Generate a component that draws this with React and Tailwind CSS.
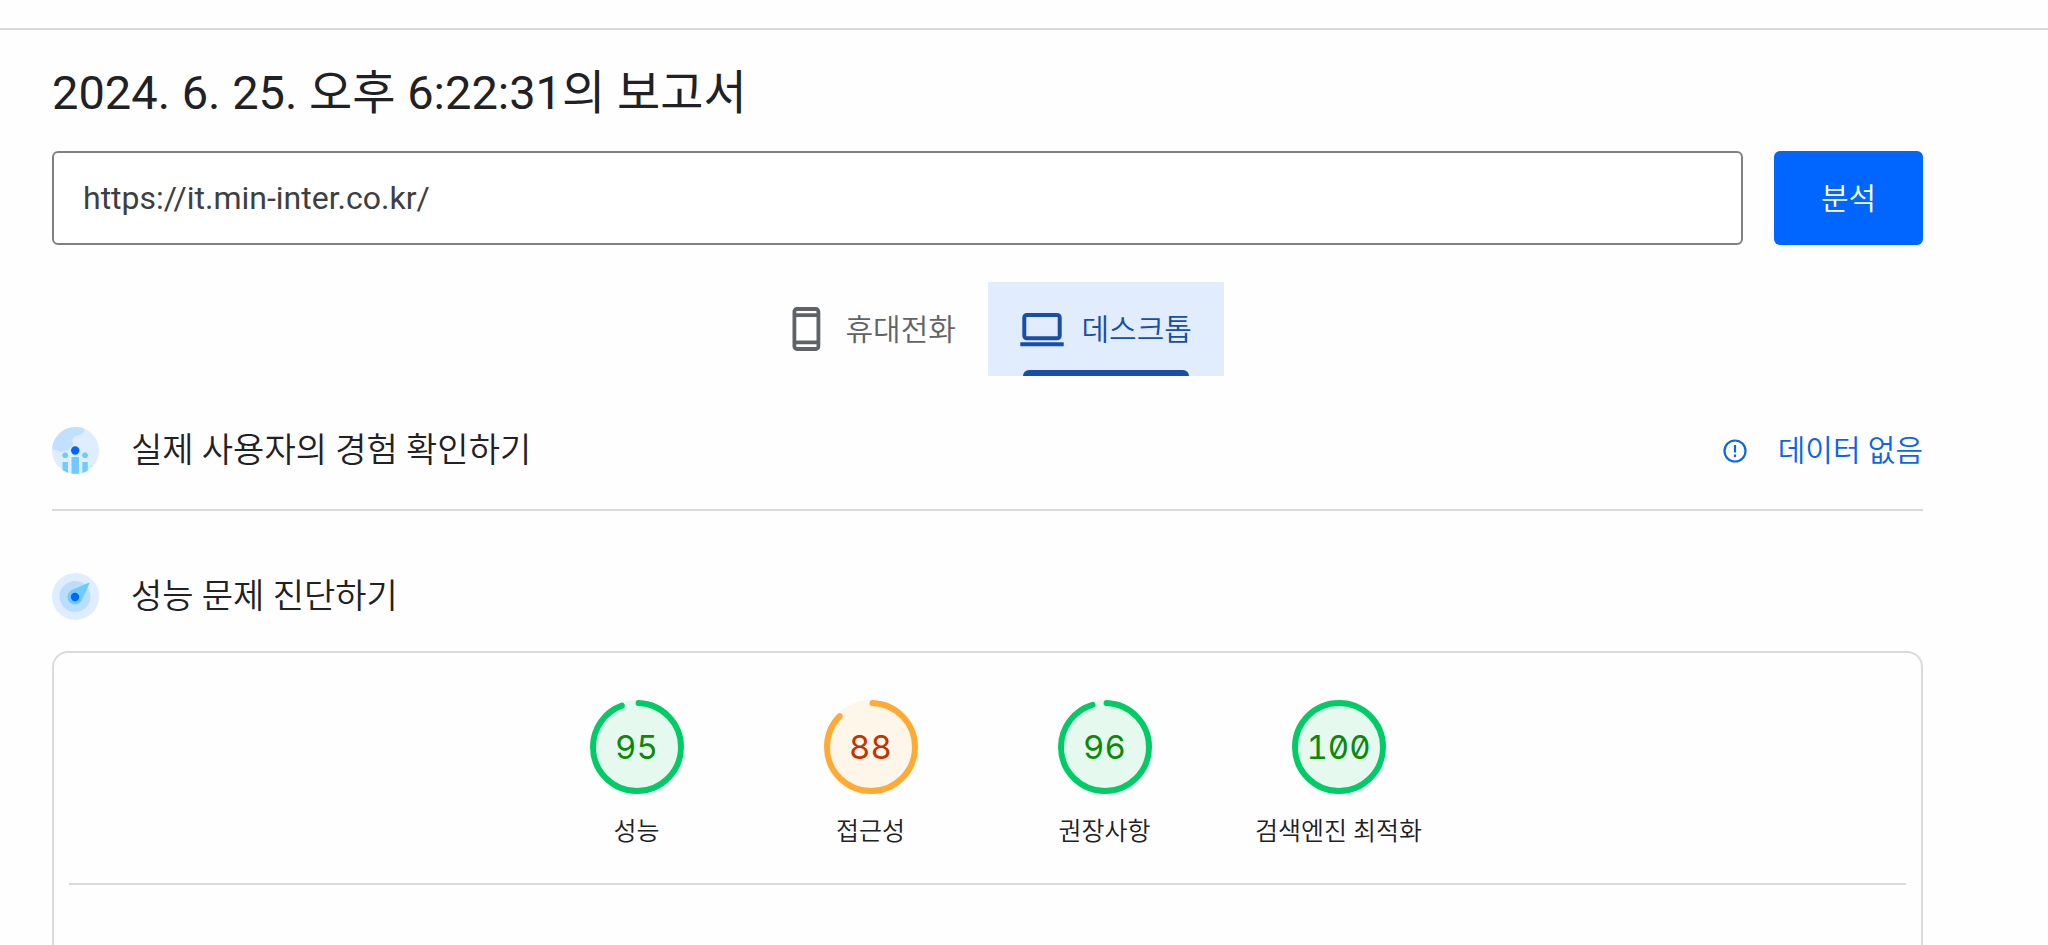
import { useState } from "react";

const GAUGES = [
  { label: "성능", score: 95, tone: "pass" },
  { label: "접근성", score: 88, tone: "average" },
  { label: "권장사항", score: 96, tone: "pass" },
  { label: "검색엔진 최적화", score: 100, tone: "pass" },
];

const TONES = {
  pass: { ring: "stroke-[#00cc66]", fill: "fill-[#e5f9ee]", text: "text-[#0a8a0a]" },
  average: { ring: "stroke-[#ffaa33]", fill: "fill-[#fff6ea]", text: "text-[#c33300]" },
};

function PhoneIcon() {
  return (
    <svg viewBox="0 0 44 44" className="size-11 shrink-0" fill="none" stroke="currentColor" strokeWidth="3.8" aria-hidden="true">
      <rect x="10.4" y="2" width="24" height="40" rx="2.5" />
      <path d="M10 8.2h24M10 35.4h24" />
    </svg>
  );
}

function LaptopIcon() {
  return (
    <svg viewBox="0 0 44 44" className="size-11 shrink-0" fill="none" stroke="currentColor" strokeWidth="4" aria-hidden="true">
      <rect x="4.3" y="8" width="35.4" height="23.3" rx="2.5" />
      <path d="M.3 37.2h43.4" />
    </svg>
  );
}

function UsersIcon() {
  return (
    <svg viewBox="0 0 47 47" className="size-[47px] shrink-0" aria-hidden="true">
      <clipPath id="globe">
        <circle cx="23.5" cy="23.5" r="23.5" />
      </clipPath>
      <g clipPath="url(#globe)">
        <rect width="47" height="47" fill="#deedff" />
        <path d="M0 0h30c3 2 3 4 1 6-2 2-5 2-7 3-3 1-3 3-4 4-1 1 1 2 1 4 0 3-3 3-4 5s-3 1-5 2-3 1-5 0-4-1-7-2z" fill="#bfe0ff" />
        <g fill="#6fcbff" stroke="#e6f2ff" strokeWidth="1">
          <path d="M19 29.5h8.500v20H19zM10 34.500h6.500v13H10zM29.800 34.500h6.500v13h-6.500z" />
          <circle cx="13.200" cy="28.300" r="3.500" />
          <circle cx="33" cy="28.300" r="3.500" />
        </g>
        <circle cx="39.500" cy="39" r="1" fill="#bfe0ff" />
        <circle cx="23.200" cy="23.500" r="4.200" fill="#0066ff" />
      </g>
    </svg>
  );
}

function CompassIcon() {
  return (
    <svg viewBox="0 0 47 47" className="size-[47px] shrink-0" aria-hidden="true">
      <circle cx="23.5" cy="23.5" r="23.5" fill="#deedff" />
      <circle cx="23" cy="23.5" r="15.5" fill="#bbdeff" />
      <g fill="#6fcbff">
        <circle cx="23" cy="24" r="7.6" />
        <path d="M18.500 17.800 36.300 9.800q1.600-.5 1 1L29.300 28.500z" />
      </g>
      <circle cx="23" cy="24" r="4.200" fill="#0066ff" />
    </svg>
  );
}

function InfoIcon() {
  return (
    <svg viewBox="0 0 24 24" className="size-6 shrink-0" fill="none" stroke="currentColor" strokeWidth="2.2" aria-hidden="true">
      <circle cx="12" cy="12" r="10.5" />
      <path d="M12 6v7.500M12 15.500v2.500" />
    </svg>
  );
}

function Gauge({ label, score, tone }) {
  const colors = TONES[tone];
  // round caps stick out past the arc, so the dash is cut a little short
  const dash = score === 100 ? 100 : score - 1.2;
  return (
    <a href="#" className="flex w-[234px] flex-col items-center">
      <div className="grid size-[94px] place-items-center">
        <svg viewBox="0 0 94 94" className="col-start-1 row-start-1 size-full -rotate-90" aria-hidden="true">
          <circle cx="47" cy="47" r="47" className={colors.fill} />
          <circle
            cx="47"
            cy="47"
            r="44"
            fill="none"
            strokeWidth="6"
            strokeLinecap="round"
            pathLength="100"
            strokeDasharray={`${dash} 100`}
            strokeDashoffset={score === 100 ? 0 : -0.6}
            className={colors.ring}
          />
        </svg>
        <span className={`z-10 col-start-1 row-start-1 font-[Inter,sans-serif] text-[33px] leading-10 slashed-zero tabular-nums ${colors.text}`}>
          {score}
        </span>
      </div>
      <span className="mt-5 text-[25px] leading-9 font-[350]">{label}</span>
    </a>
  );
}

function Tab({ icon, label, active, onClick }) {
  return (
    <button
      type="button"
      role="tab"
      aria-selected={active}
      onClick={onClick}
      className={`relative flex h-[94px] w-[236px] items-center gap-[18px] pl-8 text-[30px] font-[350] ${
        active ? "bg-[#e1edfc] text-[#174ea6]" : "text-[#5f6368]"
      }`}
    >
      {icon}
      {label}
      {active && <span className="absolute inset-x-[35px] bottom-0 h-1.5 rounded-t-md bg-[#174ea6]" />}
    </button>
  );
}

export default function App() {
  const [url, setUrl] = useState("https://it.min-inter.co.kr/");
  const [device, setDevice] = useState("desktop");

  return (
    <div className="flex min-h-screen flex-col bg-[#fefefe] font-[Roboto,'Noto_Sans_CJK_KR',sans-serif] text-[#202124]">
      <header className="h-[30px] shrink-0 border-b-2 border-[#dadada]" />

      <main className="mr-[125px] ml-13 flex flex-1 flex-col">
        <h1 className="mt-[33px] text-[47px] leading-[60px]">2024. 6. 25. 오후 6:22:31의 보고서</h1>

        <form className="mt-7 flex gap-[31px]" onSubmit={(e) => e.preventDefault()}>
          <input
            type="url"
            aria-label="웹페이지 URL"
            value={url}
            onChange={(e) => setUrl(e.target.value)}
            className="h-[94px] min-w-0 flex-1 rounded-md border-2 border-[#808080] bg-white px-[29px] text-[32px] text-[#3c4043]"
          />
          <button type="submit" className="h-[94px] w-[149px] rounded-md bg-[#0066ff] text-[30px] font-[350] text-white">
            분석
          </button>
        </form>

        <div role="tablist" className="mt-[37px] flex justify-center">
          <Tab icon={<PhoneIcon />} label="휴대전화" active={device === "mobile"} onClick={() => setDevice("mobile")} />
          <Tab icon={<LaptopIcon />} label="데스크톱" active={device === "desktop"} onClick={() => setDevice("desktop")} />
        </div>

        <section className="mt-4 flex items-center border-b-2 border-[#dadada] py-[35px]">
          <UsersIcon />
          <h2 className="ml-8 text-[34px] leading-[47px] font-[350]">실제 사용자의 경험 확인하기</h2>
          <div className="ml-auto flex items-center gap-[31px] text-[#0b65e8]">
            <InfoIcon />
            <span className="text-[30px] leading-10 font-[350]">데이터 없음</span>
          </div>
        </section>

        <section className="flex flex-1 flex-col">
          <div className="mt-[62px] flex items-center">
            <CompassIcon />
            <h2 className="ml-8 text-[34px] leading-[47px] font-[350]">성능 문제 진단하기</h2>
          </div>

          <div className="mt-[31px] flex-1 rounded-t-2xl border-2 border-b-0 border-[#dadada] px-[15px]">
            <div className="flex justify-center border-b-2 border-[#dadada] pt-[47px] pb-[33px]">
              {GAUGES.map((g) => (
                <Gauge key={g.label} {...g} />
              ))}
            </div>
          </div>
        </section>
      </main>
    </div>
  );
}
